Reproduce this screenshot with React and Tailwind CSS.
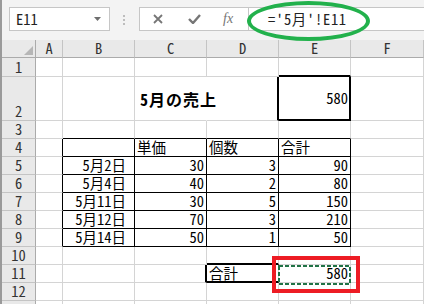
import React from 'react';

const gothic = "font-['Noto_Sans_CJK_JP',sans-serif] [font-feature-settings:'hwid']";

// cell borders: right + bottom, per cell
const GRID = 'border-r border-b border-[#d4d4d4]';

const rowHeights = ['h-[19px]', 'h-[44px]', 'h-[18px]', 'h-[18px]', 'h-[18px]', 'h-[18px]', 'h-[18px]', 'h-[18px]', 'h-[18px]', 'h-[18px]', 'h-[18px]', 'h-[18px]', 'h-[18px]'];

const sales = [
  ['5月2日', '30', '3', '90'],
  ['5月4日', '40', '2', '80'],
  ['5月11日', '30', '5', '150'],
  ['5月12日', '70', '3', '210'],
  ['5月14日', '50', '1', '50'],
];

// returns { cls, text, align } for a cell (row 1-based, col 0 = A)
function cellFor(r, c) {
  const inTable = r >= 4 && r <= 9 && c >= 1 && c <= 4;
  let cls = GRID;
  let text = null;
  let align = 'justify-end pr-[2px]';

  if (r === 1 && c === 4) cls = 'border-r border-r-[#d4d4d4] border-b-2 border-b-black';
  if (r === 2 && c === 2) cls = 'border-r border-r-transparent border-b border-b-[#d4d4d4]';
  if (r === 2 && c === 3) cls = 'border-r-2 border-r-black border-b border-b-[#d4d4d4]';
  if (r === 2 && c === 4) cls = 'border-r-2 border-b-2 border-black';
  if (r === 3 && c >= 1 && c <= 4) cls = 'border-r border-r-[#d4d4d4] border-b border-b-black';
  if (r >= 4 && r <= 9 && c === 0) cls = 'border-r border-r-black border-b border-b-[#d4d4d4]';
  if (inTable) cls = 'border-r border-b border-black';
  if (r === 10 && c === 3) cls = 'border-r border-r-[#d4d4d4] border-b-2 border-b-black';
  if (r === 11 && c === 2) cls = 'border-r-2 border-r-black border-b border-b-[#d4d4d4]';
  if (r === 11 && c === 3) cls = 'border-r border-r-[#d4d4d4] border-b-2 border-b-black';

  if (r === 2 && c === 2) {
    return { cls, text: '5月の売上', align: 'justify-start pl-[5px] items-center font-bold text-[16px] tracking-[1px] whitespace-nowrap overflow-visible' };
  }
  if (r === 2 && c === 4) return { cls, text: '580', align: 'justify-end pr-[1px] items-center' };
  if (r === 4 && c >= 2) {
    return { cls, text: ['単価', '個数', '合計'][c - 2], align: 'justify-start pl-[2px] items-end pb-[1px]' };
  }
  if (r >= 5 && r <= 9 && c >= 1 && c <= 4) {
    text = sales[r - 5][c - 1];
    align = c === 1 ? 'justify-end pr-[8px] items-end pb-[1px]' : 'justify-end pr-[2px] items-end pb-[1px]';
  }
  if (r === 11 && c === 3) return { cls, text: '合計', align: 'justify-start pl-[2px] items-end' };
  if (r === 11 && c === 4) return { cls, text: '580', align: 'justify-end pr-[2px] items-end pb-[1px]' };
  return { cls, text, align: align + ' items-end pb-[1px]' };
}

const Toolbar = () => (
  <div className="flex h-[40px] items-start pt-[7px] bg-[#f3f3f3]">
    <div className="ml-[7px] flex h-[24px] w-[101px] items-center border border-[#c6c6c6] bg-white">
      <span className={`${gothic} pl-[6px] text-[14.5px] leading-none text-[#222]`}>E11</span>
      <svg className="ml-auto mr-[8px]" width="7" height="4" viewBox="0 0 7 4">
        <polygon points="0,0 7,0 3.5,4" fill="#6e6e6e" />
      </svg>
    </div>
    <div className="ml-[13px] mt-[8px] flex flex-col gap-[2px]">
      <span className="h-[2px] w-[2px] bg-[#bdbdbd]" />
      <span className="h-[2px] w-[2px] bg-[#bdbdbd]" />
      <span className="h-[2px] w-[2px] bg-[#bdbdbd]" />
    </div>
    <div className="ml-[14px] flex h-[24px] w-[110px] items-center border border-[#c6c6c6] bg-white">
      <svg className="ml-[13px]" width="10" height="10" viewBox="0 0 10 10">
        <path d="M1 1 L9 9 M9 1 L1 9" stroke="#767676" strokeWidth="1.8" />
      </svg>
      <svg className="ml-[25px]" width="13" height="10" viewBox="0 0 13 10">
        <path d="M1 5 L5 9 L12 1" stroke="#767676" strokeWidth="2.4" fill="none" />
      </svg>
      <span className="ml-[22px] font-['Liberation_Serif',serif] text-[14px] italic leading-none text-[#767676]">fx</span>
    </div>
    <div className="flex h-[24px] flex-1 items-center border-y border-[#c6c6c6] bg-white">
      <span className={`${gothic} pl-[19px] text-[14.5px] leading-none tracking-[0.7px] text-[#222]`}>='5月'!E11</span>
    </div>
  </div>
);

export default function App() {
  const rows = Array.from({ length: 13 }, (_, i) => i + 1);
  return (
    <div className={`relative h-[304px] w-[424px] overflow-hidden border-l-2 border-[#9a9a9a] bg-white ${gothic} text-[14.5px] text-black`}>
      <Toolbar />
      <div className="grid grid-cols-[34px_27px_72px_72px_72px_72px_73px]">
        {/* column headers */}
        <div className="relative h-[18px] border-r border-b border-[#ababab] bg-[#e9e9e9]">
          <svg className="absolute right-[2px] bottom-[2px]" width="9" height="9" viewBox="0 0 9 9">
            <polygon points="9,0 9,9 0,9" fill="#b6b6b6" />
          </svg>
        </div>
        {['A', 'B', 'C', 'D', 'E', 'F'].map((l) => (
          <div key={l} className="flex h-[18px] items-end justify-center border-r border-r-[#c4c4c4] border-b border-b-[#ababab] bg-[#e9e9e9] pb-[1px] leading-[16px] text-[#333]">
            {l}
          </div>
        ))}

        {rows.map((r) => (
          <React.Fragment key={r}>
            <div className={`flex ${rowHeights[r - 1]} items-end justify-center border-r border-r-[#ababab] border-b border-b-[#c4c4c4] bg-[#e9e9e9] pb-[1px] leading-[16px] text-[#333]`}>
              {r < 13 ? r : null}
            </div>
            {[0, 1, 2, 3, 4, 5].map((c) => {
              const { cls, text, align } = cellFor(r, c);
              return (
                <div key={c} className={`flex ${rowHeights[r - 1]} ${cls} ${align} leading-[16px]`}>
                  {text}
                </div>
              );
            })}
          </React.Fragment>
        ))}
      </div>

      {/* copy marquee on E11 */}
      <svg className="absolute left-[276px] top-[265px]" width="73" height="20" viewBox="0 0 73 20">
        <rect x="1" y="1" width="71" height="18" fill="none" stroke="#217346" strokeWidth="2" strokeDasharray="4 2" />
      </svg>
      {/* annotations */}
      <div className="absolute left-[270px] top-[256px] h-[37px] w-[88px] border-4 border-[#ed1c24]" />
      <div className="absolute left-[245px] top-[1px] h-[40px] w-[123px] rounded-[50%] border-4 border-[#22b14c]" />
    </div>
  );
}
